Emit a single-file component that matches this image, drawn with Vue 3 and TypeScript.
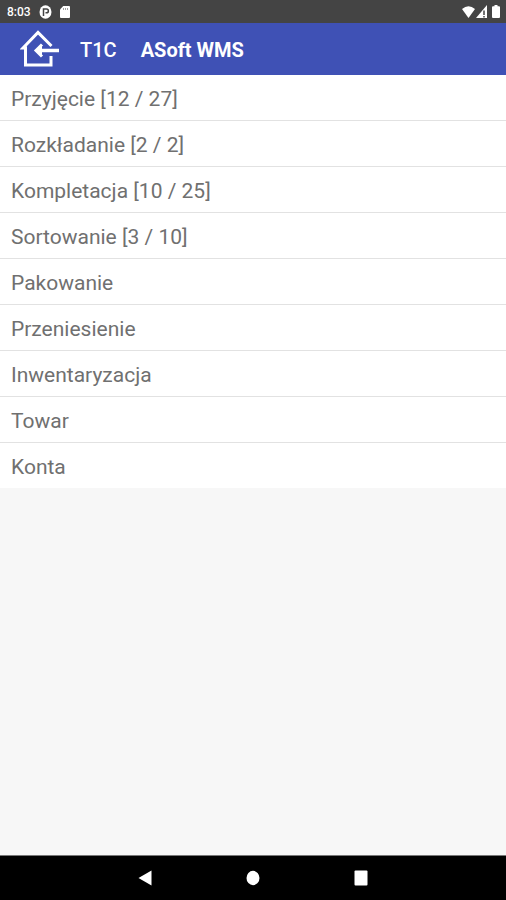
<script setup lang="ts">
interface MenuItem {
  id: string
  label: string
  count?: string
}

const items: MenuItem[] = [
  { id: 'przyjecie', label: 'Przyjęcie', count: '[12 / 27]' },
  { id: 'rozkladanie', label: 'Rozkładanie', count: '[2 / 2]' },
  { id: 'kompletacja', label: 'Kompletacja', count: '[10 / 25]' },
  { id: 'sortowanie', label: 'Sortowanie', count: '[3 / 10]' },
  { id: 'pakowanie', label: 'Pakowanie' },
  { id: 'przeniesienie', label: 'Przeniesienie' },
  { id: 'inwentaryzacja', label: 'Inwentaryzacja' },
  { id: 'towar', label: 'Towar' },
  { id: 'konta', label: 'Konta' },
]
</script>

<template>
  <div class="screen">
    <div class="status">
      <span class="time">8:03</span>
      <svg class="notice" width="13" height="14" viewBox="0 0 13 14">
        <ellipse cx="6.5" cy="7" rx="6" ry="6.7" fill="#fff" />
        <path d="M4.500 11V4H7.500C10 4 10 7.800 7.500 7.800H6.500" fill="none" stroke="#444" stroke-width="1.500" />
      </svg>
      <svg width="10" height="12" viewBox="0 0 10 12">
        <path d="M3.2 0H9Q10 0 10 1V11Q10 12 9 12H1Q0 12 0 11V3.5Z" fill="#fff" />
        <path d="M3.5 2V4M5.5 2V4M7.5 2V4" stroke="#888" stroke-width="0.8" />
      </svg>
      <div class="signals">
        <svg width="13" height="12" viewBox="0 0 13 12">
          <path d="M0 3Q6.5-2.5 13 3L6.5 12Z" fill="#fff" />
        </svg>
        <svg width="11" height="13" viewBox="0 0 11 13">
          <path d="M0 13L11 0V13Z" fill="#fff" />
          <path d="M8 5.500V10M8 11V12.500" stroke="#444" stroke-width="1.500" />
        </svg>
        <svg class="battery" width="8" height="13" viewBox="0 0 8 13">
          <path d="M2.5 0H5.5V1.3H7Q8 1.3 8 2.3V12Q8 13 7 13H1Q0 13 0 12V2.3Q0 1.3 1 1.3H2.5Z" fill="#fff" />
        </svg>
      </div>
    </div>

    <header class="bar">
      <button class="home" type="button" aria-label="Wyjście">
        <svg width="40" height="40" viewBox="0 0 40 40" fill="none" stroke="#fff" stroke-width="3">
          <path d="M31.500 17L18 3.500L3 19H5.500V36H31V27" />
          <path d="M39 21.500H17" stroke-width="3.500" />
          <path d="M22 15.500L16 21.500L22 27.500" fill="#fff" />
        </svg>
      </button>
      <span class="code">T1C</span>
      <h1 class="title">ASoft WMS</h1>
    </header>

    <main class="content">
      <ul class="menu">
        <li v-for="item in items" :key="item.id" class="row">
          <button class="entry" type="button">{{ item.label }}<template v-if="item.count">&nbsp;{{ item.count }}</template></button>
        </li>
      </ul>
    </main>

    <nav class="nav">
      <button type="button" aria-label="Wstecz">
        <svg width="14" height="16" viewBox="0 0 14 16"><path d="M13.500 0.500V15.500L0.500 8Z" fill="#fff" /></svg>
      </button>
      <button type="button" aria-label="Ekran główny">
        <svg width="14" height="16" viewBox="0 0 14 16"><ellipse cx="7" cy="8" rx="6.500" ry="7.200" fill="#fff" /></svg>
      </button>
      <button type="button" aria-label="Ostatnie">
        <svg width="14" height="16" viewBox="0 0 14 16"><rect x="0.500" y="0.500" width="13" height="15" rx="1" fill="#fff" /></svg>
      </button>
    </nav>
  </div>
</template>

<style>
body {
  background: #f7f7f7;
}
</style>

<style scoped>
.screen {
  display: flex;
  flex-direction: column;
  min-height: 100vh;
  font-family: Roboto, 'Liberation Sans', sans-serif;
}

button {
  border: 0;
  padding: 0;
  background: none;
  font: inherit;
  color: inherit;
  cursor: pointer;
}

svg {
  display: block;
}

.status {
  display: flex;
  align-items: center;
  height: 23px;
  padding: 0 6px 0 7px;
  background: #444;
  color: #fff;
}

.time {
  font-size: 12px;
  font-weight: 500;
}

.notice {
  margin: 0 8px;
}

.signals {
  display: flex;
  align-items: center;
  gap: 1px;
  margin-left: auto;
}

.battery {
  margin-left: 4px;
}

.bar {
  display: flex;
  align-items: center;
  height: 52px;
  padding: 0 20px;
  background: #3f51b5;
  color: #fff;
}

.code,
.title {
  font-size: 20px;
  line-height: 24px;
  padding-top: 2px;
}

.code {
  margin: 0 24px 0 20px;
  font-weight: 500;
}

.title {
  margin: 0;
  font-weight: 700;
}

.content {
  flex: 1;
}

.menu {
  margin: 0;
  padding: 0;
  list-style: none;
  background: #fff;
}

.row {
  border-bottom: 1px solid #e2e2e2;
}

.row:last-child {
  border-bottom: 0;
}

.entry {
  display: block;
  width: 100%;
  padding: 4px 11px 0;
  font-size: 21px;
  line-height: 41px;
  text-align: left;
  color: #707070;
}

.nav {
  display: flex;
  justify-content: center;
  align-items: center;
  gap: 94px;
  height: 44px;
  border-top: 1px solid #777;
  background: #000;
}
</style>
